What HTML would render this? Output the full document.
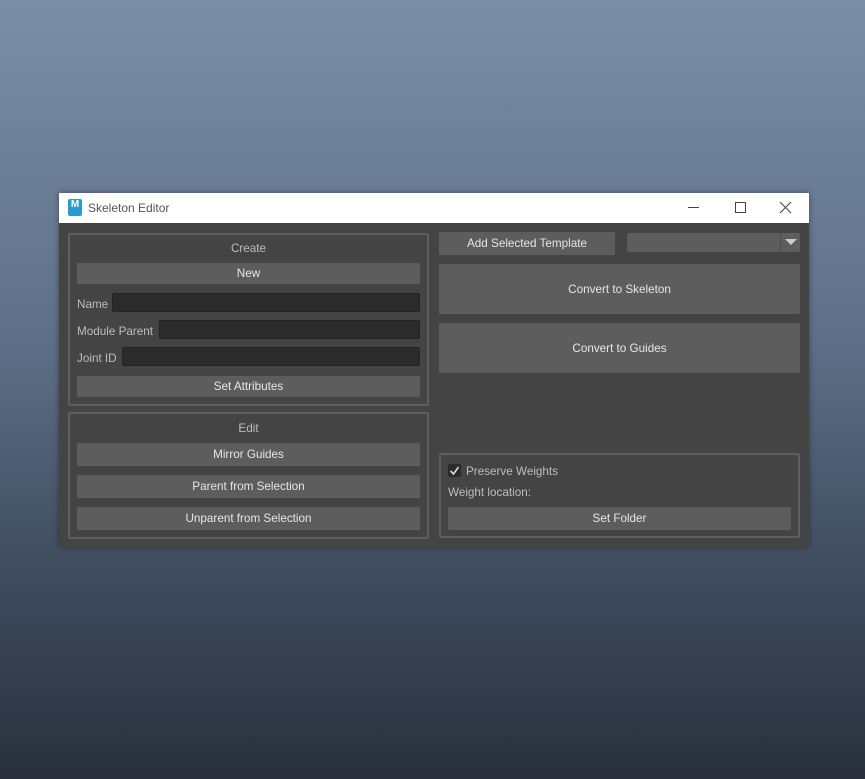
<!DOCTYPE html>
<html><head><style>
body{margin:0;width:865px;height:779px;background:linear-gradient(#7c8ea7,#5d6e86 45%,#3e4a5c 75%,#29303c);font-family:"Liberation Sans",sans-serif;font-size:11.7px;position:relative;overflow:hidden}
.a{position:absolute;box-sizing:border-box}
.win{left:59px;top:193px;width:750px;height:354px;background:#444;box-shadow:0 0 6px rgba(0,0,0,.4)}
.tb{left:0;top:0;width:750px;height:30px;background:#fff;color:#555;font-size:12px}
.grp{border:2px solid #5e5e5e;border-radius:2px}
.btn{background:#5d5d5d;color:#e6e6e6;text-align:center;border-radius:1px}
.fld{background:#2b2b2b;border:1px solid #222;border-radius:2px}
.lbl{color:#bdbdbd}
</style></head><body>
<div class="a win">
 <div class="a tb">
  <div class="a" style="left:9px;top:6px;width:14px;height:17px;background:#2b9ad1;border-radius:2px;color:#fff;font-size:10px;font-weight:bold;text-align:center;line-height:12px">M</div>
  <div class="a" style="left:29px;top:8px;color:#555">Skeleton Editor</div>
  <div class="a" style="left:629px;top:14px;width:11px;height:1px;background:#444"></div>
  <div class="a" style="left:676px;top:9px;width:11px;height:11px;border:1px solid #444"></div>
  <svg class="a" style="left:720px;top:8px" width="13" height="13"><path d="M1 1L12 12M12 1L1 12" stroke="#444" stroke-width="1"/></svg>
 </div>
</div>
<div class="a grp" style="left:68px;top:233px;width:361px;height:173px"></div>
<div class="a lbl" style="left:68px;top:242px;width:361px;text-align:center">Create</div>
<div class="a btn" style="left:77px;top:263px;width:343px;height:21px;line-height:22px">New</div>
<div class="a lbl" style="left:77px;top:298px">Name</div>
<div class="a fld" style="left:112px;top:293px;width:308px;height:19px"></div>
<div class="a lbl" style="left:77px;top:325px">Module Parent</div>
<div class="a fld" style="left:159px;top:320px;width:261px;height:19px"></div>
<div class="a lbl" style="left:77px;top:352px">Joint ID</div>
<div class="a fld" style="left:122px;top:347px;width:298px;height:19px"></div>
<div class="a btn" style="left:77px;top:376px;width:343px;height:21px;line-height:22px">Set Attributes</div>
<div class="a grp" style="left:68px;top:412px;width:361px;height:127px"></div>
<div class="a lbl" style="left:68px;top:422px;width:361px;text-align:center">Edit</div>
<div class="a btn" style="left:77px;top:443px;width:343px;height:23px;line-height:24px">Mirror Guides</div>
<div class="a btn" style="left:77px;top:475px;width:343px;height:23px;line-height:24px">Parent from Selection</div>
<div class="a btn" style="left:77px;top:507px;width:343px;height:23px;line-height:24px">Unparent from Selection</div>
<div class="a btn" style="left:439px;top:232px;width:176px;height:23px;line-height:24px">Add Selected Template</div>
<div class="a" style="left:627px;top:233px;width:173px;height:19px;background:#5d5d5d;border-radius:2px"></div>
<div class="a" style="left:780px;top:233px;width:1px;height:19px;background:#4d4d4d"></div>
<div class="a" style="left:785px;top:239px;width:0;height:0;border-left:6px solid transparent;border-right:6px solid transparent;border-top:6px solid #ccc"></div>
<div class="a btn" style="left:439px;top:264px;width:361px;height:50px;line-height:52px">Convert to Skeleton</div>
<div class="a btn" style="left:439px;top:323px;width:361px;height:50px;line-height:52px">Convert to Guides</div>
<div class="a grp" style="left:439px;top:453px;width:361px;height:85px"></div>
<div class="a" style="left:448px;top:464px;width:13px;height:13px;background:#2b2b2b;border-radius:2px"></div>
<svg class="a" style="left:449px;top:465px" width="11" height="11"><path d="M1.5 6L4.5 9L9.5 2" stroke="#ddd" stroke-width="1.6" fill="none"/></svg>
<div class="a lbl" style="left:466px;top:465px">Preserve Weights</div>
<div class="a lbl" style="left:448px;top:486px">Weight location:</div>
<div class="a btn" style="left:448px;top:507px;width:343px;height:23px;line-height:24px">Set Folder</div>
</body></html>
